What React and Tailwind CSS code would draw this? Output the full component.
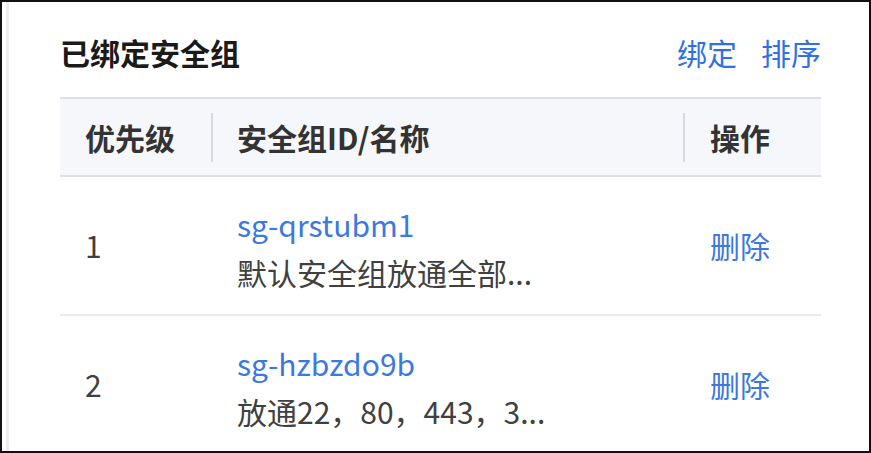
export default function App() {
  const font = { fontFamily: '"Noto Sans CJK SC", "Noto Sans", sans-serif' };
  const rows = [
    { n: "1", id: "sg-qrstubm1", desc: "默认安全组放通全部..." },
    { n: "2", id: "sg-hzbzdo9b", desc: "放通22，80，443，3..." },
  ];
  return (
    <div
      className="w-[871px] h-[453px] border-2 border-[#111] bg-white overflow-hidden flex"
      style={font}
    >
      <div className="ml-[4px] border-l-[3px] border-[#ededed] flex-1 pl-[51px] pr-[48px] pt-[30px]">
        <div className="flex items-center justify-between h-[40px] leading-[40px]">
          <div className="text-[30px] font-bold text-[#1a1a1a]">已绑定安全组</div>
          <div className="flex gap-[24px] text-[30px] text-[#2f70e6]">
            <span>绑定</span>
            <span>排序</span>
          </div>
        </div>
        <div className="mt-[25px] border-t-2 border-b-2 border-[#dcdfe6] bg-[#f5f7fa] h-[80px] flex items-center text-[30px] font-semibold text-[#333]">
          <div className="w-[151px] pl-[25px]">优先级</div>
          <div className="w-[2px] h-[49px] bg-[#d6dae2]"></div>
          <div className="w-[470px] pl-[24px]">安全组ID/名称</div>
          <div className="w-[2px] h-[49px] bg-[#d6dae2]"></div>
          <div className="flex-1 pl-[25px]">操作</div>
        </div>
        {rows.map((r) => (
          <div
            key={r.n}
            className="h-[139px] border-b-2 border-[#e8ebf0] flex items-center text-[30px] text-[#404040]"
          >
            <div className="w-[151px] pl-[25px]">{r.n}</div>
            <div className="w-[472px] pl-[26px] flex flex-col leading-[48px] pt-[4px]">
              <span className="text-[#3b78df]">{r.id}</span>
              <span className="whitespace-nowrap">{r.desc}</span>
            </div>
            <div className="flex-1 pl-[27px] text-[#3b78df]">删除</div>
          </div>
        ))}
      </div>
    </div>
  );
}
